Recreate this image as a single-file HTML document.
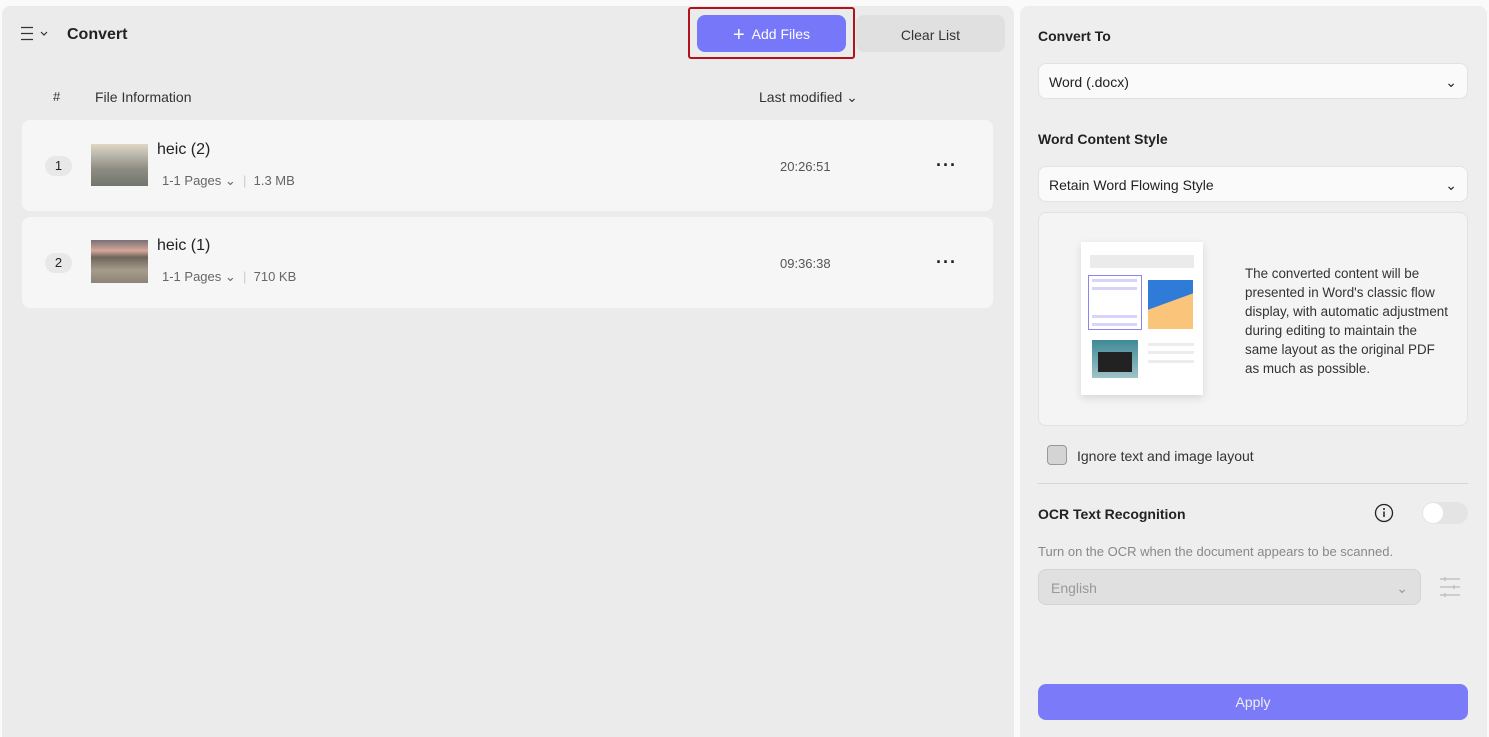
<!DOCTYPE html>
<html><head><style>
*{box-sizing:border-box;margin:0;padding:0}
body{width:1489px;height:737px;background:#fafafa;font-family:"Liberation Sans",sans-serif;position:relative;overflow:hidden;color:#222}
.a{position:absolute}
.left{left:2px;top:6px;width:1012px;height:731px;background:#ebebeb;border-radius:8px 8px 0 0}
.right{left:1020px;top:6px;width:467px;height:731px;background:#eeeeee;border-radius:8px 8px 0 0}
.card{background:#f6f6f6;border-radius:8px}
.sel{background:#fafafa;border:1px solid #e2e2e2;border-radius:8px;font-size:14px;color:#222}
.sm{font-size:13px;color:#555}
</style></head><body>
<div class="a left"></div>
<div class="a right"></div>
<svg class="a" style="left:20px;top:26px" width="32" height="16"><path d="M1 1.5h12M1 7.5h12M1 13.5h12" stroke="#333" stroke-width="1.2"/><path d="M21 6l3 3 3-3" stroke="#333" fill="none" stroke-width="1.2"/></svg>
<div class="a" style="left:67px;top:26px;font-size:16px;font-weight:bold">Convert</div>
<div class="a" style="left:688px;top:7px;width:167px;height:52px;border:2px solid #b3121d;border-radius:3px"></div>
<div class="a" style="left:697px;top:15px;width:149px;height:37px;background:#7777fa;border-radius:8px;color:#fff;font-size:14px;line-height:39px;text-align:center"><span style="font-size:20px;vertical-align:-2px">+</span>&nbsp; Add Files</div>
<div class="a" style="left:856px;top:15px;width:149px;height:37px;background:#e0e0e0;border-radius:8px;color:#333;font-size:14px;line-height:41px;text-align:center">Clear List</div>
<div class="a sm" style="left:53px;top:89px;color:#333">#</div>
<div class="a" style="left:95px;top:89px;font-size:14px;color:#333">File Information</div>
<div class="a" style="left:759px;top:89px;font-size:14px;color:#333">Last modified ⌄</div>
<div class="a card" style="left:22px;top:120px;width:971px;height:91px"></div>
<div class="a card" style="left:22px;top:217px;width:971px;height:91px"></div>
<div class="a" style="left:45px;top:156px;width:27px;height:20px;background:#e8e8e8;border-radius:10px;font-size:13px;text-align:center;line-height:20px">1</div>
<div class="a" style="left:45px;top:253px;width:27px;height:20px;background:#e8e8e8;border-radius:10px;font-size:13px;text-align:center;line-height:20px">2</div>
<div class="a" style="left:91px;top:144px;width:57px;height:42px;background:linear-gradient(#e0d6c4 0%,#b5b3a8 30%,#8e8c82 60%,#70766e 100%)"></div>
<div class="a" style="left:91px;top:240px;width:57px;height:43px;background:linear-gradient(#7b6e78 0%,#d4a898 25%,#6e645a 40%,#a69c8c 70%,#8c8478 100%)"></div>
<div class="a" style="left:157px;top:141px;font-size:16px">heic (2)</div>
<div class="a" style="left:157px;top:237px;font-size:16px">heic (1)</div>
<div class="a sm" style="left:162px;top:173px;color:#666">1-1 Pages ⌄ &nbsp;<span style="color:#ccc">|</span>&nbsp; 1.3 MB</div>
<div class="a sm" style="left:162px;top:269px;color:#666">1-1 Pages ⌄ &nbsp;<span style="color:#ccc">|</span>&nbsp; 710 KB</div>
<div class="a sm" style="left:780px;top:159px">20:26:51</div>
<div class="a sm" style="left:780px;top:256px">09:36:38</div>
<div class="a" style="left:936px;top:155px;font-size:18px;font-weight:bold;letter-spacing:1px">···</div>
<div class="a" style="left:936px;top:252px;font-size:18px;font-weight:bold;letter-spacing:1px">···</div>
<div class="a" style="left:1038px;top:28px;font-size:14px;font-weight:bold">Convert To</div>
<div class="a sel" style="left:1038px;top:63px;width:430px;height:36px;padding:10px 10px">Word (.docx)<span style="float:right">⌄</span></div>
<div class="a" style="left:1038px;top:131px;font-size:14px;font-weight:bold">Word Content Style</div>
<div class="a sel" style="left:1038px;top:166px;width:430px;height:36px;padding:10px 10px">Retain Word Flowing Style<span style="float:right">⌄</span></div>
<div class="a" style="left:1038px;top:212px;width:430px;height:214px;background:#f4f4f4;border:1px solid #e2e2e2;border-radius:8px"></div>
<div class="a" style="left:1081px;top:242px;width:122px;height:153px;background:#fff;box-shadow:0 3px 8px rgba(0,0,0,.12)">
 <div class="a" style="left:9px;top:13px;width:104px;height:13px;background:#ebebeb"></div>
 <div class="a" style="left:7px;top:33px;width:54px;height:55px;border:1px solid #8a86f0"></div>
 <div class="a" style="left:11px;top:37px;width:45px;height:3px;background:#d6d4fa;box-shadow:0 8px 0 #d6d4fa,0 36px 0 #d6d4fa,0 44px 0 #d6d4fa"></div>
 <div class="a" style="left:67px;top:38px;width:45px;height:49px;background:linear-gradient(160deg,#2e7bd8 45%,#fbc47b 46%)"></div>
 <div class="a" style="left:11px;top:98px;width:46px;height:38px;background:linear-gradient(#3f8a96,#9fc3c8)"><div class="a" style="left:6px;top:12px;width:34px;height:20px;background:#222"></div></div>
 <div class="a" style="left:67px;top:101px;width:46px;height:3px;background:#ececec;box-shadow:0 8px 0 #ececec,0 17px 0 #ececec"></div>
</div>
<div class="a" style="left:1245px;top:264px;width:206px;font-size:13.4px;line-height:19px;color:#333">The converted content will be presented in Word's classic flow display, with automatic adjustment during editing to maintain the same layout as the original PDF as much as possible.</div>
<div class="a" style="left:1047px;top:445px;width:20px;height:20px;background:#d4d4d4;border:1px solid #999;border-radius:4px"></div>
<div class="a" style="left:1077px;top:448px;font-size:14px;color:#333">Ignore text and image layout</div>
<div class="a" style="left:1038px;top:483px;width:430px;height:1px;background:#d6d6d6"></div>
<div class="a" style="left:1038px;top:506px;font-size:14px;font-weight:bold">OCR Text Recognition</div>
<svg class="a" style="left:1374px;top:503px" width="20" height="20"><circle cx="10" cy="10" r="8.5" fill="none" stroke="#222" stroke-width="1.3"/><path d="M10 8.5v5.5" stroke="#222" stroke-width="1.5"/><circle cx="10" cy="6" r="1" fill="#222"/></svg>
<div class="a" style="left:1422px;top:502px;width:46px;height:22px;background:#e4e4e4;border-radius:11px"><div class="a" style="left:1px;top:1px;width:20px;height:20px;background:#fff;border-radius:50%"></div></div>
<div class="a" style="left:1038px;top:544px;font-size:13px;color:#888">Turn on the OCR when the document appears to be scanned.</div>
<div class="a" style="left:1038px;top:569px;width:383px;height:36px;background:#e0e0e0;border:1px solid #d4d4d4;border-radius:8px;padding:10px 12px;font-size:14px;color:#999">English<span style="float:right">⌄</span></div>
<svg class="a" style="left:1439px;top:576px" width="22" height="22"><path d="M1 3h20M1 11h20M1 19h20" stroke="#bbb" stroke-width="1.2"/><path d="M6 1v4M15 9v4M6 17v4" stroke="#bbb" stroke-width="1.2"/></svg>
<div class="a" style="left:1038px;top:684px;width:430px;height:36px;background:#7b7bfa;border-radius:8px;color:#eee;font-size:14px;line-height:37px;text-align:center">Apply</div>
</body></html>
